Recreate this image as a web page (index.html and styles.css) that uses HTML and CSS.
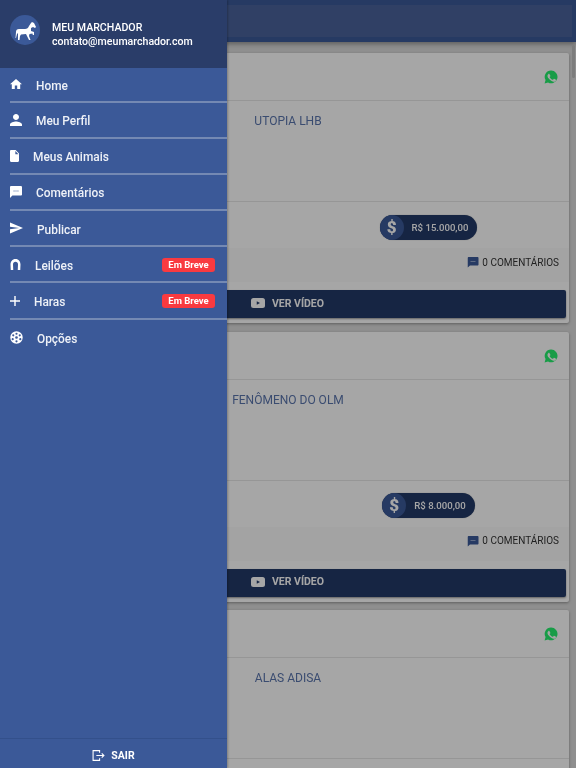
FILE: index.html
```html
<!DOCTYPE html>
<html lang="pt-BR">
<head>
<meta charset="utf-8">
<title>Meu Marchador</title>
<link rel="stylesheet" href="styles.css">
</head>
<body>
<svg class="defs" width="0" height="0" aria-hidden="true">
  <symbol id="i-wa" viewBox="0 0 24 24"><path d="M12 1a10.800 10.800 0 0 0-9.300 16.300L1 23l5.900-1.600A10.900 10.900 0 1 0 12 1z"/><path fill="#fff" d="M8.300 6.600c-.3 0-.7.100-1 .5-.4.400-1.300 1.300-1.300 3s1.300 3.500 1.500 3.700c.2.200 2.500 4 6.200 5.400 3 1.200 3.700.9 4.300.9.700-.1 2.100-.9 2.400-1.700.3-.8.3-1.500.2-1.700-.1-.1-.3-.2-.7-.4l-2.500-1.200c-.3-.1-.6-.2-.8.200l-1.100 1.400c-.2.200-.4.300-.8.100-.4-.2-1.500-.6-2.900-1.800a11 11 0 0 1-2-2.500c-.2-.4 0-.6.200-.8l.5-.6c.2-.2.2-.3.400-.6.100-.2.100-.5 0-.7L9.500 7.300c-.3-.7-.6-.7-.8-.7z"/></symbol>
  <symbol id="i-chat" viewBox="0 0 24 24"><path d="M21 2H3.500C2.400 2 1.500 2.900 1.500 4v19l4.500-4h15c1.100 0 2-.9 2-2V4c0-1.100-.9-2-2-2z"/><path fill="var(--dots,#fff)" d="M7 10h10v1.600H7z"/></symbol>
  <symbol id="i-yt" viewBox="0 0 28 20"><rect x="0" y="0" width="28" height="20" rx="5"/><path fill="var(--play,#000)" d="M11.500 6.500 18 10l-6.500 3.500z"/></symbol>
</svg>

<div class="page">
  <header class="topbar"><div class="topbar-inner"></div></header>
  <main class="feed">
    <article class="card">
      <div class="card-head"><svg class="wa"><use href="#i-wa"/></svg></div>
      <div class="card-name"><span class="name">UTOPIA LHB</span></div>
      <div class="card-price"><span></span><div class="pill-cell"><div class="pill"><span class="coin">$</span><span class="amount">R$ 15.000,00</span></div></div></div>
      <div class="card-comments"><svg class="chat"><use href="#i-chat"/></svg><span>0 COMENTÁRIOS</span></div>
      <div class="card-action"><button class="video"><svg class="yt"><use href="#i-yt"/></svg><span>VER VÍDEO</span></button></div>
    </article>
    <article class="card">
      <div class="card-head"><svg class="wa"><use href="#i-wa"/></svg></div>
      <div class="card-name"><span class="name">FENÔMENO DO OLM</span></div>
      <div class="card-price"><span></span><div class="pill-cell"><div class="pill"><span class="coin">$</span><span class="amount">R$ 8.000,00</span></div></div></div>
      <div class="card-comments"><svg class="chat"><use href="#i-chat"/></svg><span>0 COMENTÁRIOS</span></div>
      <div class="card-action"><button class="video"><svg class="yt"><use href="#i-yt"/></svg><span>VER VÍDEO</span></button></div>
    </article>
    <article class="card">
      <div class="card-head"><svg class="wa"><use href="#i-wa"/></svg></div>
      <div class="card-name"><span class="name">ALAS ADISA</span></div>
      <div class="card-price"></div>
    </article>
  </main>
  <div class="scrollthumb"></div>
</div>

<div class="scrim"></div>

<aside class="drawer">
  <div class="drawer-head">
    <div class="avatar">
      <svg viewBox="0 0 30 30" width="30" height="30"><path fill="#fff" d="M22 7l2 1 2 4-1 1-2-1-2 1v3l3 1v3h-1.200l-.3-1.500-3 .5-.5 2 1.500 4H19l-2-4-1-2-5 .5-1 1.500-.5 4H8v-7l-1 1-1 4h-.5l.5-6q0-3 3-3h6q3 0 4-3l2-3z"/></svg>
    </div>
    <div class="who">
      <div>MEU MARCHADOR</div>
      <div>contato@meumarchador.com</div>
    </div>
  </div>

  <nav class="menu">
    <a class="item"><svg class="ic w12" viewBox="2 3 20 17"><path d="M10 20v-6h4v6h5v-8h3L12 3 2 12h3v8z"/></svg><span>Home</span></a>
    <a class="item"><svg class="ic w12" viewBox="4 4 16 16"><path d="M12 12c2.200 0 4-1.800 4-4s-1.800-4-4-4-4 1.800-4 4 1.800 4 4 4zm0 2c-2.700 0-8 1.300-8 4v2h16v-2c0-2.700-5.300-4-8-4z"/></svg><span>Meu Perfil</span></a>
    <a class="item"><svg class="ic w9" viewBox="4 2 16 20" preserveAspectRatio="none"><path d="M14 2H6c-1.100 0-2 .9-2 2v16c0 1.100.9 2 2 2h12c1.100 0 2-.9 2-2V8l-6-6zm-.5 7V3.500L19 9h-5.500z"/></svg><span>Meus Animais</span></a>
    <a class="item"><svg class="ic w12" viewBox="2 2 20 20"><path d="M20 2H4c-1.100 0-2 .9-2 2v18l4-4h14c1.100 0 2-.9 2-2V4c0-1.100-.9-2-2-2z"/><path fill="#3b5998" d="M8 9.500h1.500V11H8zm3.250 0h1.500V11h-1.500zm3.250 0H16V11h-1.500z"/></svg><span>Comentários</span></a>
    <a class="item"><svg class="ic w13" viewBox="2 3 21 18"><path d="M2 21l21-9L2 3v7l15 2-15 2z"/></svg><span>Publicar</span></a>
    <a class="item"><svg class="ic w11 tall" viewBox="0 0 22 24"><path d="M11 1C4.500 1 1 6 1 12l.5 11h5L6 12c0-3.400 2-5.500 5-5.500s5 2.100 5 5.500l-.5 11h5L21 12c0-6-3.500-11-10-11z"/></svg><span>Leilões</span><em class="soon">Em Breve</em></a>
    <a class="item"><svg class="ic w10" viewBox="5 5 14 14"><path d="M19 13h-6v6h-2v-6H5v-2h6V5h2v6h6v2z"/></svg><span>Haras</span><em class="soon">Em Breve</em></a>
    <a class="item last"><svg class="ic w13 tall" viewBox="0 0 24 24"><path fill-rule="evenodd" d="M12 .5a11.500 11.500 0 1 0 0 23 11.500 11.500 0 0 0 0-23zM12 3a2 2 0 1 1 0 4 2 2 0 0 1 0-4zM6 6a2 2 0 1 1 0 4 2 2 0 0 1 0-4zm12 0a2 2 0 1 1 0 4 2 2 0 0 1 0-4zM12 9.500a2.500 2.500 0 1 1 0 5 2.500 2.500 0 0 1 0-5zM5 13a2 2 0 1 1 0 4 2 2 0 0 1 0-4zm14 0a2 2 0 1 1 0 4 2 2 0 0 1 0-4zm-7 4a2 2 0 1 1 0 4 2 2 0 0 1 0-4z"/></svg><span>Opções</span></a>
  </nav>

  <a class="logout">
    <svg viewBox="0 0 24 24" width="13" height="13" fill="none" stroke="#fff" stroke-width="2"><path d="M14 7V3H2v18h12v-4"/><path d="M8 12h14M18 8l4 4-4 4"/></svg>
    <span>SAIR</span>
  </a>
</aside>
</body>
</html>
```

FILE: styles.css
```css
* { box-sizing: border-box; }

html, body {
  margin: 0;
  height: 768px;
  overflow: hidden;
  font-family: Roboto, "Liberation Sans", sans-serif;
}

body { filter: blur(0.6px); background: #dcdcdc; }

.defs { position: absolute; }

.page { height: 768px; overflow: hidden; background: #dcdcdc; }

.topbar {
  height: 42px;
  padding: 5px 4px 5px 0;
  background: #3b5998;
  box-shadow: 0 2px 5px rgba(0, 0, 0, .35);
}
.topbar-inner { height: 32px; background: #4a639b; }

.feed { padding: 11px 7px 0 7px; display: flex; flex-direction: column; gap: 8.500px; }

.card {
  background: #fff;
  box-shadow: 0 1px 3px rgba(0, 0, 0, .35);
  border-radius: 2px;
  height: 270px;
  flex: none;
}

.card-head {
  height: 48px;
  display: flex;
  justify-content: flex-end;
  align-items: center;
  padding: 0 11px 0 0;
  border-bottom: 1px solid #e6e6e6;
}
.wa { width: 14px; height: 14px; fill: #25f06e; margin-top: 1px; }

.card-name {
  height: 101px;
  padding-top: 12px;
  border-bottom: 1px solid #e6e6e6;
  text-align: center;
  font-size: 12px;
  line-height: 16px;
  color: #5a75ad;
}

.card-price {
  height: 46px;
  padding-top: 4px;
  display: grid;
  grid-template-columns: 1fr 1fr;
  align-items: center;
}
.pill-cell { display: flex; justify-content: center; }
.pill {
  display: flex;
  align-items: center;
  height: 25px;
  border-radius: 13px;
  background: #233a68;
  color: #fff;
  padding-right: 9px;
  box-shadow: 0 0 1px rgba(0, 0, 0, .4);
}
.coin {
  width: 24px;
  height: 25px;
  border-radius: 50%;
  background: #3b5998;
  font-size: 17px;
  font-weight: 900;
  line-height: 25px;
  text-align: center;
  margin-right: 8px;
}
.amount { font-size: 9.600px; font-weight: 500; }

.card-comments {
  height: 34px;
  background: #fbfbfb;
  display: flex;
  justify-content: flex-end;
  align-items: center;
  gap: 3px;
  padding: 0 10px 6px 0;
  font-size: 10px;
  color: #333;
}
.chat { width: 12px; height: 12px; fill: #3b5998; --dots: #a8b8d8; }

.card-action { padding: 8px 3px 0 3px; }
.video {
  width: 100%;
  height: 28px;
  border: 0;
  border-radius: 2px;
  background: #233a68;
  box-shadow: 0 1px 2px rgba(0, 0, 0, .4);
  color: #fff;
  font: 700 10.500px Roboto, sans-serif;
  display: flex;
  align-items: center;
  justify-content: flex-start;
  gap: 7px;
  padding: 0 0 2px 241px;
}
.yt { width: 14px; height: 10px; fill: #fff; --play: #233a68; }

.scrollthumb {
  position: absolute;
  top: 45px;
  right: 1px;
  width: 3px;
  height: 33px;
  background: #c0c0c0;
  border-radius: 2px;
}

.scrim { position: fixed; inset: 0; background: rgba(0, 0, 0, .35); }

.drawer {
  position: fixed;
  top: 0;
  left: 0;
  bottom: 0;
  width: 227px;
  background: #3b5998;
  color: #fff;
  display: flex;
  flex-direction: column;
  box-shadow: 1px 0 2px rgba(0, 0, 0, .25);
}

.drawer-head {
  height: 68px;
  flex: none;
  background: #2a3d69;
  display: flex;
  align-items: center;
  padding: 2px 0 0 10px;
  gap: 12px;
}
.avatar {
  width: 30px;
  height: 30px;
  margin-top: -10px;
  border-radius: 50%;
  background: #3b5998;
}
.avatar svg { display: block; }
.who { font-size: 10.600px; line-height: 14px; font-weight: 500; }

.menu { flex: 1; }
.item {
  display: flex;
  align-items: center;
  gap: 14px;
  height: 36.200px;
  margin-left: 10px;
  padding: 3px 12px 0 0;
  border-bottom: 2px solid #7489b3;
  font-size: 11.900px;
  font-weight: 500;
  color: #eef1f7;
}
.item:first-child { height: 34.500px; }
.item.last { border-bottom: 0; padding-top: 2px; }
.item > span { flex: 1; }

.ic { height: 12px; fill: #fff; flex: none; margin-top: -3px; }
.tall { height: 13px; }
.w9 { width: 9px; }
.w10 { width: 10px; }
.w11 { width: 11px; }
.w12 { width: 12px; }
.w13 { width: 13px; }

.soon {
  font-style: normal;
  font-size: 9.500px;
  font-weight: 700;
  background: #f93a40;
  color: #fff;
  border-radius: 3px;
  width: 53px;
  height: 14px;
  margin-top: -2px;
  line-height: 14px;
  text-align: center;
}

.logout {
  height: 30px;
  flex: none;
  border-top: 1px solid #33508b;
  display: flex;
  align-items: center;
  justify-content: center;
  gap: 6px;
  font-size: 10.500px;
  font-weight: 700;
  padding-top: 4px;
}
```
